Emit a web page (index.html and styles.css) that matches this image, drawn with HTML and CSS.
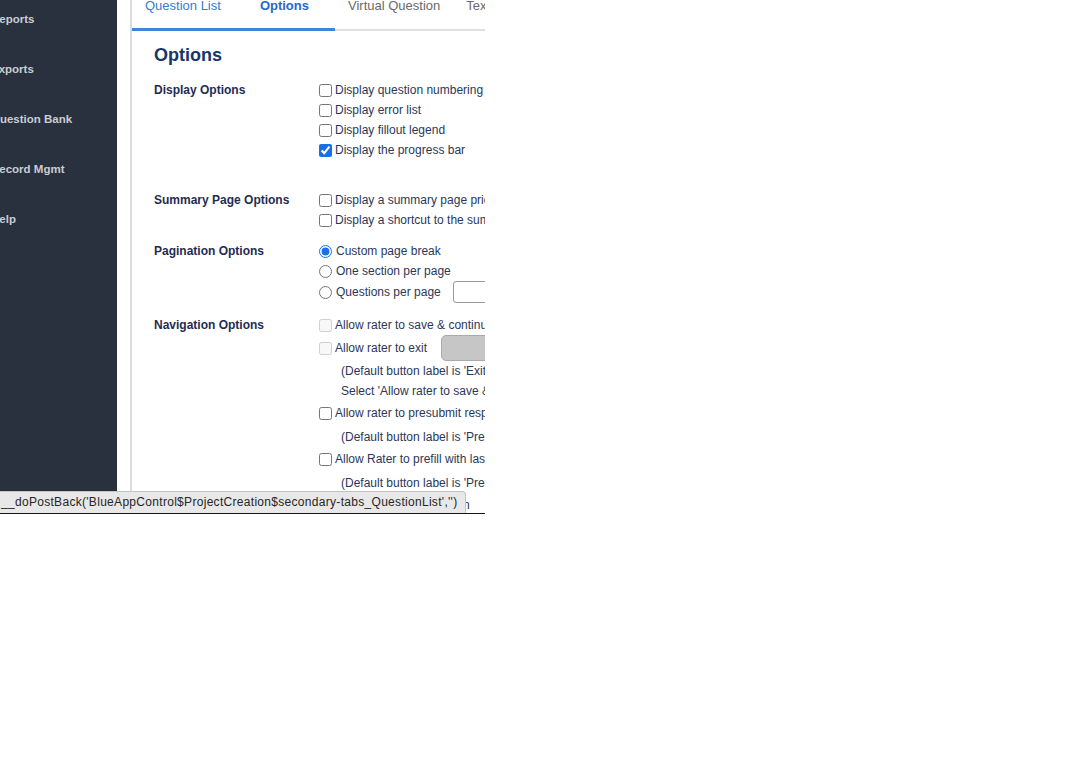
FILE: index.html
```html
<!DOCTYPE html>
<html lang="en">
<head>
<meta charset="utf-8">
<title>Project Creation - Options</title>
<link rel="stylesheet" href="styles.css">
</head>
<body>
<div class="frame">
  <aside class="sidebar">
    <ul class="nav">
      <li class="nav-item">Reports</li>
      <li class="nav-item">Exports</li>
      <li class="nav-item">Question Bank</li>
      <li class="nav-item">Record Mgmt</li>
      <li class="nav-item">Help</li>
    </ul>
  </aside>
  <main class="main">
    <nav class="tabs">
      <a class="tab hl">Question List</a>
      <a class="tab hl active">Options</a>
      <a class="tab">Virtual Question</a>
      <a class="tab">Text Substitution</a>
    </nav>
    <section class="content">
      <h1 class="title">Options</h1>

      <div class="group g-display">
        <div class="glabel">Display Options</div>
        <div class="gopts">
          <label class="opt"><input type="checkbox">Display question numbering</label>
          <label class="opt"><input type="checkbox">Display error list</label>
          <label class="opt"><input type="checkbox">Display fillout legend</label>
          <label class="opt"><input type="checkbox" checked>Display the progress bar</label>
        </div>
      </div>

      <div class="group g-summary">
        <div class="glabel">Summary Page Options</div>
        <div class="gopts">
          <label class="opt"><input type="checkbox">Display a summary page prior to submission</label>
          <label class="opt"><input type="checkbox">Display a shortcut to the summary page</label>
        </div>
      </div>

      <div class="group g-pagination">
        <div class="glabel">Pagination Options</div>
        <div class="gopts">
          <label class="opt"><input type="radio" name="pg" checked>Custom page break</label>
          <label class="opt"><input type="radio" name="pg">One section per page</label>
          <label class="opt opt-tall"><input type="radio" name="pg">Questions per page<input type="text" class="num"></label>
        </div>
      </div>

      <div class="group g-nav">
        <div class="glabel">Navigation Options</div>
        <div class="gopts">
          <label class="opt"><input type="checkbox" disabled>Allow rater to save &amp; continue later</label>
          <label class="opt opt-btn"><input type="checkbox" disabled>Allow rater to exit<button class="btn" disabled>Exit</button></label>
          <div class="note first">
            <div>(Default button label is 'Exit')</div>
            <div>Select 'Allow rater to save &amp; continue later' to enable this option</div>
          </div>
          <label class="opt"><input type="checkbox">Allow rater to presubmit responses</label>
          <div class="note"><div>(Default button label is 'Presubmit')</div></div>
          <label class="opt"><input type="checkbox">Allow Rater to prefill with last responses</label>
          <div class="note"><div>(Default button label is 'Prefill')</div></div>
          <label class="opt"><input type="checkbox">Allow rater to add section</label>
        </div>
      </div>
    </section>
  </main>
  <div class="statusbar">__doPostBack('BlueAppControl$ProjectCreation$secondary-tabs_QuestionList','')</div>
</div>
</body>
</html>
```

FILE: styles.css
```css
* { box-sizing: border-box; }

html, body {
  margin: 0;
  padding: 0;
  background: #ffffff;
}

body {
  font-family: "Liberation Sans", Arial, Helvetica, sans-serif;
}

.frame {
  position: relative;
  width: 485px;
  height: 514px;
  overflow: hidden;
  display: flex;
  align-items: stretch;
  border-bottom: 1px solid #161616;
  background: #ffffff;
}

/* ---------- sidebar ---------- */
.sidebar {
  width: 117px;
  flex-shrink: 0;
  background: #29303e;
  overflow: hidden;
}

.nav {
  list-style: none;
  margin: -6px 0 0 0;
  padding: 0;
}

.nav-item {
  height: 50px;
  line-height: 50px;
  font-size: 11.5px;
  font-weight: bold;
  color: #cacdd3;
  white-space: nowrap;
  text-indent: -9px;
}

/* ---------- main ---------- */
.main {
  flex: 1;
  min-width: 0;
  margin-left: 13px;
  border-left: 2px solid #dcdcdc;
  overflow: hidden;
}

.tabs {
  display: flex;
  margin-top: -2px;
  border-bottom: 2px solid #e0e0e0;
  white-space: nowrap;
}

.tab {
  flex-shrink: 0;
  padding: 0 13px 14px;
  margin-bottom: -2px;
  line-height: 16px;
  font-size: 13px;
  color: #6a6a6a;
  border-bottom: 3px solid transparent;
}

.tab.hl {
  color: #3a7ad3;
  border-bottom-color: #4184dc;
}

.tab.active {
  padding-left: 26px;
  padding-right: 26px;
  font-weight: bold;
  color: #2569c9;
}

.content {
  padding-left: 22px;
}

.title {
  margin: 13px 0 14px;
  font-size: 18px;
  line-height: 22px;
  font-weight: bold;
  color: #17356b;
}

.group {
  display: grid;
  grid-template-columns: 161px 1fr;
}

.g-display { margin-bottom: 30px; }
.g-summary { margin-bottom: 11px; }
.g-pagination { margin-bottom: 12px; }

.glabel {
  font-size: 12px;
  line-height: 20px;
  font-weight: bold;
  color: #1f2c52;
  white-space: nowrap;
}

.gopts {
  min-width: 0;
}

.opt {
  display: flex;
  align-items: center;
  height: 20px;
  font-size: 12px;
  color: #2b3758;
  white-space: nowrap;
}

.opt-tall { height: 22px; }
.opt-btn { height: 26px; }

.opt input[type="checkbox"] {
  width: 13px;
  height: 13px;
  margin: 0 3px 0 4px;
  flex-shrink: 0;
  accent-color: #1a6fe8;
}

.opt input[type="radio"] {
  width: 13px;
  height: 13px;
  margin: 0 4px 0 4px;
  flex-shrink: 0;
  accent-color: #1a6fe8;
}

.num {
  width: 60px;
  height: 22px;
  margin-left: 12px;
  flex-shrink: 0;
  border: 1px solid #9a9a9a;
  border-radius: 3px;
  background: #fff;
}

.btn {
  width: 100px;
  height: 26px;
  margin-left: 14px;
  flex-shrink: 0;
  border: 1px solid #aaaaaa;
  border-radius: 5px;
  background: #c6c6c6;
  color: #c6c6c6;
  font-size: 12px;
}

.note {
  margin: 4px 0 2px;
  padding-left: 26px;
  font-size: 12px;
  line-height: 20px;
  color: #2b3758;
  white-space: nowrap;
}

.note.first { margin-top: 0; }

/* ---------- browser status bubble ---------- */
.statusbar {
  position: absolute;
  left: 0;
  bottom: 0;
  width: 466px;
  height: 22px;
  padding: 0 0 0 1px;
  font-size: 12px;
  letter-spacing: 0.3px;
  line-height: 21px;
  color: #262626;
  background: #e8e8e8;
  border-top: 1px solid #c3c3c3;
  border-right: 1px solid #c3c3c3;
  border-top-right-radius: 4px;
  white-space: nowrap;
  overflow: hidden;
}
```
